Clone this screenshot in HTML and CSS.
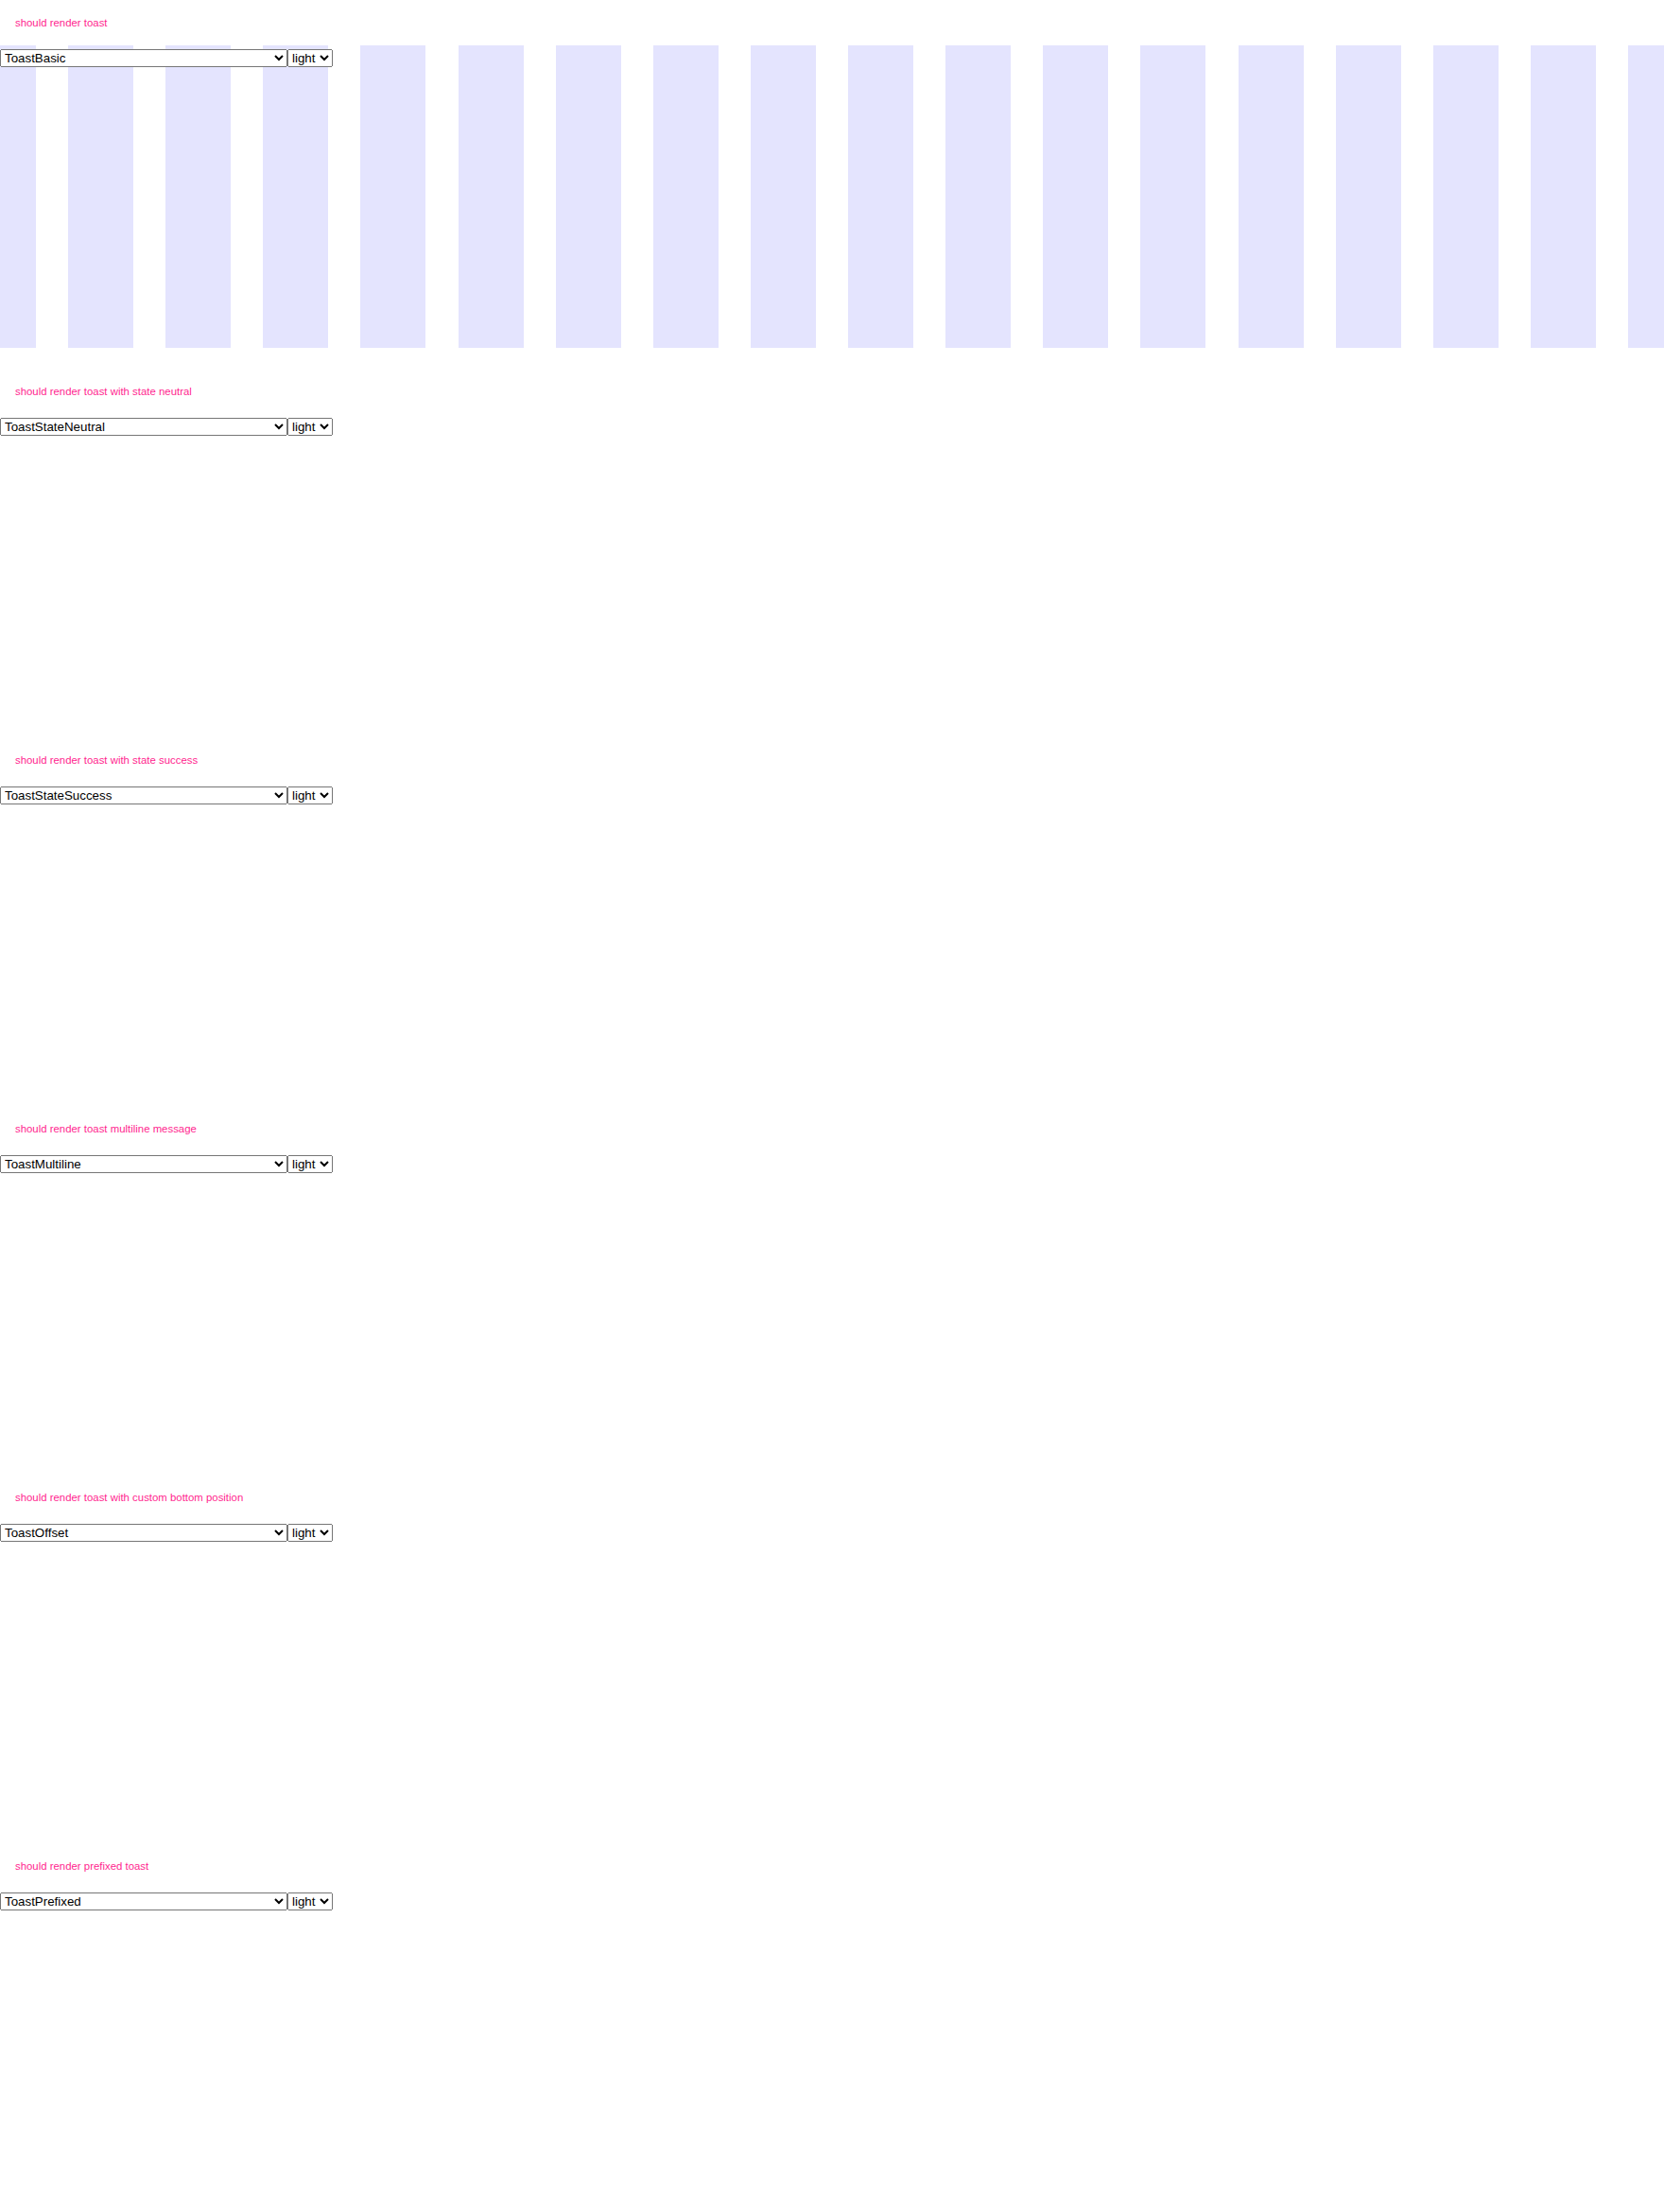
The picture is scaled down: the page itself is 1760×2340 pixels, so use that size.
FILE: index.html
```html
<!DOCTYPE html>
<html lang="en">
<head>
<meta charset="utf-8">
<title>Toast visual tests</title>
<link rel="stylesheet" href="styles.css">
</head>
<body>
<section class="case">
  <div class="case-title">should render toast</div>
  <div class="stage">
    <div class="grid-overlay">
      <div class="col"></div><div class="col"></div><div class="col"></div><div class="col"></div><div class="col"></div><div class="col"></div>
      <div class="col"></div><div class="col"></div><div class="col"></div><div class="col"></div><div class="col"></div><div class="col"></div>
      <div class="col"></div><div class="col"></div><div class="col"></div><div class="col"></div><div class="col"></div><div class="col"></div>
    </div>
    <div class="controls">
      <select class="story-select"><option selected>ToastBasic</option><option>ToastStateNeutral</option><option>ToastStateSuccess</option><option>ToastMultiline</option><option>ToastOffset</option><option>ToastPrefixed</option></select><select class="theme-select"><option selected>light</option><option>dark</option></select>
    </div>
  </div>
</section>
<section class="case">
  <div class="case-title">should render toast with state neutral</div>
  <div class="stage">
    <div class="controls">
      <select class="story-select"><option>ToastBasic</option><option selected>ToastStateNeutral</option><option>ToastStateSuccess</option><option>ToastMultiline</option><option>ToastOffset</option><option>ToastPrefixed</option></select><select class="theme-select"><option selected>light</option><option>dark</option></select>
    </div>
  </div>
</section>
<section class="case">
  <div class="case-title">should render toast with state success</div>
  <div class="stage">
    <div class="controls">
      <select class="story-select"><option>ToastBasic</option><option>ToastStateNeutral</option><option selected>ToastStateSuccess</option><option>ToastMultiline</option><option>ToastOffset</option><option>ToastPrefixed</option></select><select class="theme-select"><option selected>light</option><option>dark</option></select>
    </div>
  </div>
</section>
<section class="case">
  <div class="case-title">should render toast multiline message</div>
  <div class="stage">
    <div class="controls">
      <select class="story-select"><option>ToastBasic</option><option>ToastStateNeutral</option><option>ToastStateSuccess</option><option selected>ToastMultiline</option><option>ToastOffset</option><option>ToastPrefixed</option></select><select class="theme-select"><option selected>light</option><option>dark</option></select>
    </div>
  </div>
</section>
<section class="case">
  <div class="case-title">should render toast with custom bottom position</div>
  <div class="stage">
    <div class="controls">
      <select class="story-select"><option>ToastBasic</option><option>ToastStateNeutral</option><option>ToastStateSuccess</option><option>ToastMultiline</option><option selected>ToastOffset</option><option>ToastPrefixed</option></select><select class="theme-select"><option selected>light</option><option>dark</option></select>
    </div>
  </div>
</section>
<section class="case">
  <div class="case-title">should render prefixed toast</div>
  <div class="stage">
    <div class="controls">
      <select class="story-select"><option>ToastBasic</option><option>ToastStateNeutral</option><option>ToastStateSuccess</option><option>ToastMultiline</option><option>ToastOffset</option><option selected>ToastPrefixed</option></select><select class="theme-select"><option selected>light</option><option>dark</option></select>
    </div>
  </div>
</section>
</body>
</html>
```
FILE: styles.css
```css
html, body {
  margin: 0;
  padding: 0;
  background: #ffffff;
}

.case {
  height: 390px;
  overflow: hidden;
}

.case-title {
  padding: 16px;
  font-family: "Liberation Sans", Arial, sans-serif;
  font-size: 11.4px;
  line-height: 16px;
  color: #ff1f8f;
}

.stage {
  display: grid;
  height: 320px;
}

.stage > * {
  grid-area: 1 / 1;
}

.grid-overlay {
  display: flex;
  gap: 34.14px;
  margin-left: -31.14px;
  height: 320px;
}

.col {
  flex: 0 0 69px;
  background: #e4e4fe;
}

.controls {
  display: flex;
  align-items: flex-start;
  align-self: start;
  margin-top: 4px;
  position: relative;
}

.controls select {
  font-family: "Liberation Sans", Arial, sans-serif;
  font-size: 13.333px;
  margin: 0;
}

.story-select {
  width: 304px;
}

.theme-select {
  margin-left: 1px;
}
```
